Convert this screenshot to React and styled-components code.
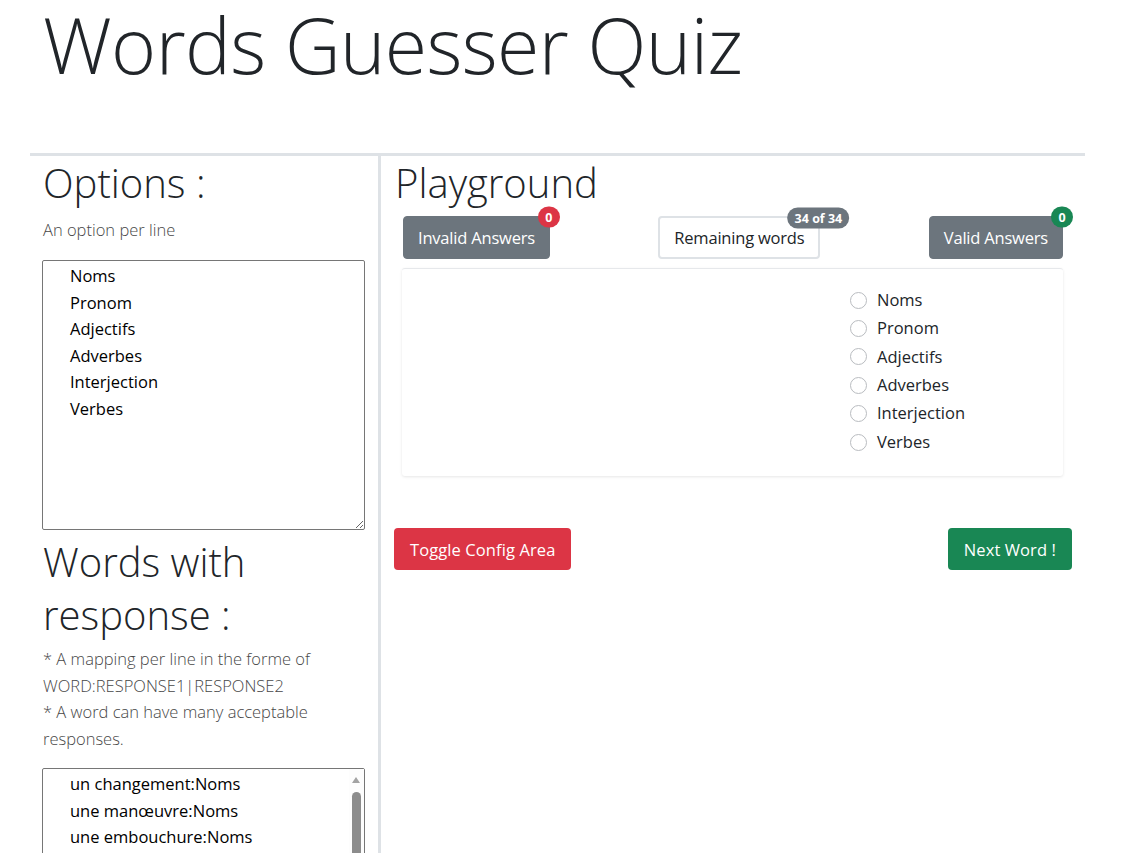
import React from "react";
import styled, { createGlobalStyle } from "styled-components";

const Global = createGlobalStyle`
  html, body { margin: 0; padding: 0; background: #fff; }
  body {
    font-family: "Open Sans", "Noto Sans", sans-serif;
    font-size: 17.6px;
    line-height: 1.5;
    color: #212529;
  }
  * { box-sizing: border-box; }
`;

const Page = styled.div`
  margin-left: 30px;
  width: 1055px;
`;

const Header = styled.header`
  height: 153px;
  padding-left: 13px;
`;

const Title = styled.h1`
  margin: 0;
  font-weight: 300;
  font-size: 77px;
  line-height: 1.18;
  letter-spacing: -0.6px;
`;

const Row = styled.div`
  display: grid;
  grid-template-columns: 348px 1fr;
  border-top: 3px solid #dee2e6;
`;

const LeftCol = styled.section`
  padding: 0 13px 0 12px;
`;

const RightCol = styled.section`
  border-left: 3px solid #dee2e6;
  padding: 0 13px;
`;

const Heading = styled.h2`
  margin: ${(p) => p.$mt || 0}px 0 0 0;
  font-weight: 300;
  font-size: 40px;
  line-height: 53px;
  padding-left: 1px;
`;

const Hint = styled.p`
  margin: ${(p) => p.$mt || 0}px 0 0 0;
  color: #474747;
  font-weight: 300;
  font-size: 16.5px;
  line-height: 26.4px;
  white-space: nowrap;
  padding-left: 1px;
`;

const AreaWrap = styled.div`
  position: relative;
  width: 323px;
  margin-top: ${(p) => p.$mt || 0}px;
`;

const Area = styled.textarea`
  display: block;
  width: 323px;
  height: 270px;
  border: 1px solid #767676;
  border-radius: 2px;
  padding: 2px 2px 2px 27px;
  font-family: "Open Sans", "Noto Sans", sans-serif;
  font-size: 16.5px;
  line-height: 26.5px;
  color: #000;
  resize: vertical;
  outline: none;
  white-space: pre;
  overflow: hidden;
`;

const ScrollTrack = styled.div`
  position: absolute;
  top: 1px;
  right: 1px;
  bottom: 1px;
  width: 15px;
  background: #fdfdfd;
`;

const ScrollArrow = styled.div`
  position: absolute;
  top: 8px;
  left: 3px;
  width: 0;
  height: 0;
  border-left: 4.5px solid transparent;
  border-right: 4.5px solid transparent;
  border-bottom: 6px solid #a3a3a3;
`;

const ScrollThumb = styled.div`
  position: absolute;
  top: 23px;
  left: 3px;
  width: 9px;
  height: 190px;
  border-radius: 5px;
  background: #8c8c8c;
`;

const Inner = styled.div`
  padding: 0 9px 0 8px;
`;

const StatsBar = styled.div`
  display: flex;
  justify-content: space-between;
  margin-top: 7px;
  padding-left: 1px;
`;

const StatButton = styled.button`
  position: relative;
  height: 43px;
  padding: 0 14px;
  border-radius: 4px;
  font-family: "Open Sans", "Noto Sans", sans-serif;
  font-size: 16.5px;
  letter-spacing: -0.2px;
  background: ${(p) => (p.$light ? "#fff" : "#6c757d")};
  color: ${(p) => (p.$light ? "#212529" : "#fff")};
  border: ${(p) => (p.$light ? "2px solid #dee2e6" : "1px solid #6c757d")};
`;

const Badge = styled.span`
  position: absolute;
  top: 0;
  left: 100%;
  transform: translate(-50%, -50%);
  min-width: 22px;
  height: 21px;
  padding: 0 7px;
  border-radius: 11px;
  display: flex;
  align-items: center;
  justify-content: center;
  font-size: 12.5px;
  font-weight: 700;
  letter-spacing: 0;
  color: #fff;
  white-space: nowrap;
  background: ${(p) => p.$bg};
`;

const Card = styled.div`
  margin-top: 9px;
  height: 208px;
  border-top: 1px solid #e6e8eb;
  box-shadow: 0 1px 3px rgba(0, 0, 0, 0.1);
  border-radius: 3px;
  display: grid;
  grid-template-columns: 448px 1fr;
  padding-top: 17px;
`;

const Choices = styled.div`
  display: flex;
  flex-direction: column;
`;

const Choice = styled.label`
  display: flex;
  align-items: center;
  gap: 10px;
  height: 28.4px;
  font-size: 16.5px;
`;

const Radio = styled.span`
  width: 17px;
  height: 17px;
  border-radius: 50%;
  border: 1px solid #b9bcc0;
  background: #fff;
`;

const Actions = styled.div`
  display: flex;
  justify-content: space-between;
  margin-top: 52px;
`;

const ActionButton = styled.button`
  height: 42px;
  padding: 0 16px;
  border: none;
  border-radius: 4px;
  font-family: "Open Sans", "Noto Sans", sans-serif;
  font-size: 16.5px;
  letter-spacing: 0.1px;
  color: #fff;
  background: ${(p) => p.$bg};
`;

const options = ["Noms", "Pronom", "Adjectifs", "Adverbes", "Interjection", "Verbes"];

const words = [
  "un changement:Noms",
  "une manœuvre:Noms",
  "une embouchure:Noms",
  "un ordinateur:Noms",
  "une fenêtre:Noms",
  "il:Pronom",
  "elle:Pronom",
  "nous:Pronom",
  "grand:Adjectifs",
  "petit:Adjectifs",
  "rapidement:Adverbes",
  "lentement:Adverbes",
  "hélas:Interjection",
  "manger:Verbes",
].join("\n");

export default function App() {
  return (
    <>
      <Global />
      <Page>
        <Header>
          <Title>Words Guesser Quiz</Title>
        </Header>
        <Row>
          <LeftCol>
            <Heading>Options :</Heading>
            <Hint $mt={8}>An option per line</Hint>
            <AreaWrap $mt={17}>
              <Area defaultValue={options.join("\n")} />
            </AreaWrap>
            <Heading $mt={5}>
              Words with
              <br />
              response :
            </Heading>
            <Hint $mt={5}>* A mapping per line in the forme of</Hint>
            <Hint>WORD:RESPONSE1|RESPONSE2</Hint>
            <Hint>* A word can have many acceptable</Hint>
            <Hint>responses.</Hint>
            <AreaWrap $mt={16}>
              <Area defaultValue={words} />
              <ScrollTrack>
                <ScrollArrow />
                <ScrollThumb />
              </ScrollTrack>
            </AreaWrap>
          </LeftCol>
          <RightCol>
            <Heading>Playground</Heading>
            <Inner>
              <StatsBar>
                <StatButton>
                  Invalid Answers
                  <Badge $bg="#dc3545">0</Badge>
                </StatButton>
                <StatButton $light>
                  Remaining words
                  <Badge $bg="#6c757d">34 of 34</Badge>
                </StatButton>
                <StatButton>
                  Valid Answers
                  <Badge $bg="#198754">0</Badge>
                </StatButton>
              </StatsBar>
              <Card>
                <div />
                <Choices>
                  {options.map((o) => (
                    <Choice key={o}>
                      <Radio />
                      {o}
                    </Choice>
                  ))}
                </Choices>
              </Card>
            </Inner>
            <Actions>
              <ActionButton $bg="#dc3545">Toggle Config Area</ActionButton>
              <ActionButton $bg="#198754">Next Word !</ActionButton>
            </Actions>
          </RightCol>
        </Row>
      </Page>
    </>
  );
}
